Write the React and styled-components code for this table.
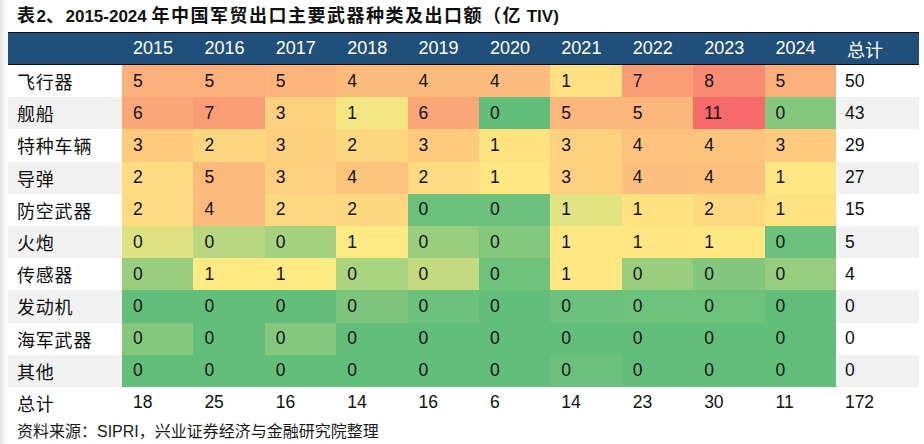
import React from 'react';
import styled, { createGlobalStyle } from 'styled-components';

const GlobalStyle = createGlobalStyle`
	html, body {
		margin: 0;
		padding: 0;
		background: linear-gradient(to right, #e4e4e4 0, #f7f7f7 5px, #ffffff 9px);
	}
	body {
		font-family: 'Liberation Sans', Arial, 'Noto Sans CJK SC', sans-serif;
		color: #111;
	}
`;

const years = ['2015', '2016', '2017', '2018', '2019', '2020', '2021', '2022', '2023', '2024'];

// value + cell colour per year, taken from the conditional colour scale
const rows = [
	{ name: '飞行器', total: 50, cells: [[5, '#fbb07b'], [5, '#fbb07b'], [5, '#fcb47c'], [4, '#fdbb7d'], [4, '#fcb97c'], [4, '#fdbc7d'], [1, '#ffe082'], [7, '#fa9c75'], [8, '#f98b72'], [5, '#fbb07b']] },
	{ name: '舰船', total: 43, cells: [[6, '#fba878'], [7, '#fa9c75'], [3, '#fdd17f'], [1, '#f4e783'], [6, '#fba677'], [0, '#63be7b'], [5, '#fcb77c'], [5, '#fcb77c'], [11, '#f8696b'], [0, '#85c77d']] },
	{ name: '特种车辆', total: 29, cells: [[3, '#fdca7e'], [2, '#fed680'], [3, '#fdcf7f'], [2, '#fed880'], [3, '#fdca7e'], [1, '#ffe383'], [3, '#fed17f'], [4, '#fdc27d'], [4, '#fdc47e'], [3, '#fdca7e']] },
	{ name: '导弹', total: 27, cells: [[2, '#ffdb81'], [5, '#fcba7c'], [3, '#fed07f'], [4, '#fdc47d'], [2, '#ffdc81'], [1, '#ffe783'], [3, '#fed07f'], [4, '#fdbf7d'], [4, '#fdc07d'], [1, '#ffe783']] },
	{ name: '防空武器', total: 15, cells: [[2, '#ffdc81'], [4, '#fcbb7c'], [2, '#fed980'], [2, '#fed880'], [0, '#6bc17c'], [0, '#6cc17c'], [1, '#e2e383'], [1, '#ffe182'], [2, '#fed980'], [1, '#ffe382']] },
	{ name: '火炮', total: 5, cells: [[0, '#dfe283'], [0, '#b8d780'], [0, '#a5d27f'], [1, '#ffe983'], [0, '#99ce7e'], [0, '#85c77d'], [1, '#ffe883'], [1, '#ffe683'], [1, '#ffe883'], [0, '#6cc17c']] },
	{ name: '传感器', total: 4, cells: [[0, '#99ce7e'], [1, '#ffe983'], [1, '#ffe983'], [0, '#aad480'], [0, '#c3da81'], [0, '#6ec27c'], [1, '#fde883'], [0, '#9ace7f'], [0, '#82c77d'], [0, '#97cd7e']] },
	{ name: '发动机', total: 0, cells: [[0, '#63be7b'], [0, '#63be7b'], [0, '#63be7b'], [0, '#7dc57d'], [0, '#6cc17c'], [0, '#64be7b'], [0, '#6cc17c'], [0, '#6ec27c'], [0, '#6ec27c'], [0, '#63be7b']] },
	{ name: '海军武器', total: 0, cells: [[0, '#85c77d'], [0, '#63be7b'], [0, '#85c77d'], [0, '#63be7b'], [0, '#63be7b'], [0, '#63be7b'], [0, '#63be7b'], [0, '#63be7b'], [0, '#63be7b'], [0, '#63be7b']] },
	{ name: '其他', total: 0, cells: [[0, '#63be7b'], [0, '#63be7b'], [0, '#63be7b'], [0, '#63be7b'], [0, '#63be7b'], [0, '#63be7b'], [0, '#6bc17c'], [0, '#63be7b'], [0, '#63be7b'], [0, '#63be7b']] },
];

const totals = [18, 25, 16, 14, 16, 6, 14, 23, 30, 11];

export default function App() {
	return (
		<>
			<GlobalStyle />
			<Page>
				<Title>
					<Han>表</Han>2<Han>、</Han>2015-2024 <Han>年中国军贸出口主要武器种类及出口额（亿</Han> TIV)
				</Title>
				<Table>
					<HeaderRow>
						<HeadCell />
						{years.map(y => (
							<HeadCell key={y}>{y}</HeadCell>
						))}
						<HeadCell>总计</HeadCell>
					</HeaderRow>
					{rows.map((row, i) => (
						<Row key={row.name}>
							<Label han shade={i % 2 === 1}>{row.name}</Label>
							{row.cells.map(([v, c], j) => (
								<Cell key={j} bg={c}>
									{v}
								</Cell>
							))}
							<Label shade={i % 2 === 1}>{row.total}</Label>
						</Row>
					))}
					<Row>
						<Label han>总计</Label>
						{totals.map((t, j) => (
							<Cell key={j}>{t}</Cell>
						))}
						<Label>172</Label>
					</Row>
				</Table>
				<Source>资料来源：SIPRI，兴业证券经济与金融研究院整理</Source>
			</Page>
		</>
	);
}

const Page = styled.div`
	width: 924px;
	height: 444px;
	padding-left: 8px;
	box-sizing: border-box;
	overflow: hidden;
`;

const Title = styled.div`
	height: 32px;
	padding: 6px 0 0 9px;
	box-sizing: border-box;
	font-size: 17px;
	font-weight: 700;
	line-height: 21px;
	color: #111;
	white-space: nowrap;
`;

const Han = styled.span`
	font-size: 18px;
	letter-spacing: 1.5px;
`;

const Table = styled.div`
	width: 911px;
	display: flex;
	flex-direction: column;
`;

const grid = `
	display: grid;
	grid-template-columns: 114px repeat(10, 71.4px) 1fr;
`;

const HeaderRow = styled.div`
	${grid};
	height: 33px;
	background: #1f4f7a;
	border-top: 1.5px solid #0d0d0d;
	border-bottom: 1px solid #0d0d0d;
	box-sizing: border-box;
`;

const HeadCell = styled.div`
	display: flex;
	align-items: center;
	padding-left: 11px;
	color: #ffffff;
	font-size: 18px;
`;

const Row = styled.div`
	${grid};
	height: 32.2px;
`;

const Label = styled.div`
	display: flex;
	align-items: center;
	padding-left: 9px;
	font-size: ${props => (props.han ? '18px' : '17.5px')};
	letter-spacing: ${props => (props.han ? '0.8px' : '0')};
	background: ${props => (props.shade ? '#f2f2f2' : '#ffffff')};
	color: #111;
`;

const Cell = styled.div`
	display: flex;
	align-items: center;
	padding-left: 11px;
	font-size: 17.5px;
	background: ${props => props.bg || 'transparent'};
	color: #111;
`;

const Source = styled.div`
	padding: 2px 0 0 9px;
	font-size: 16px;
	line-height: 22px;
	color: #1a1a1a;
`;
